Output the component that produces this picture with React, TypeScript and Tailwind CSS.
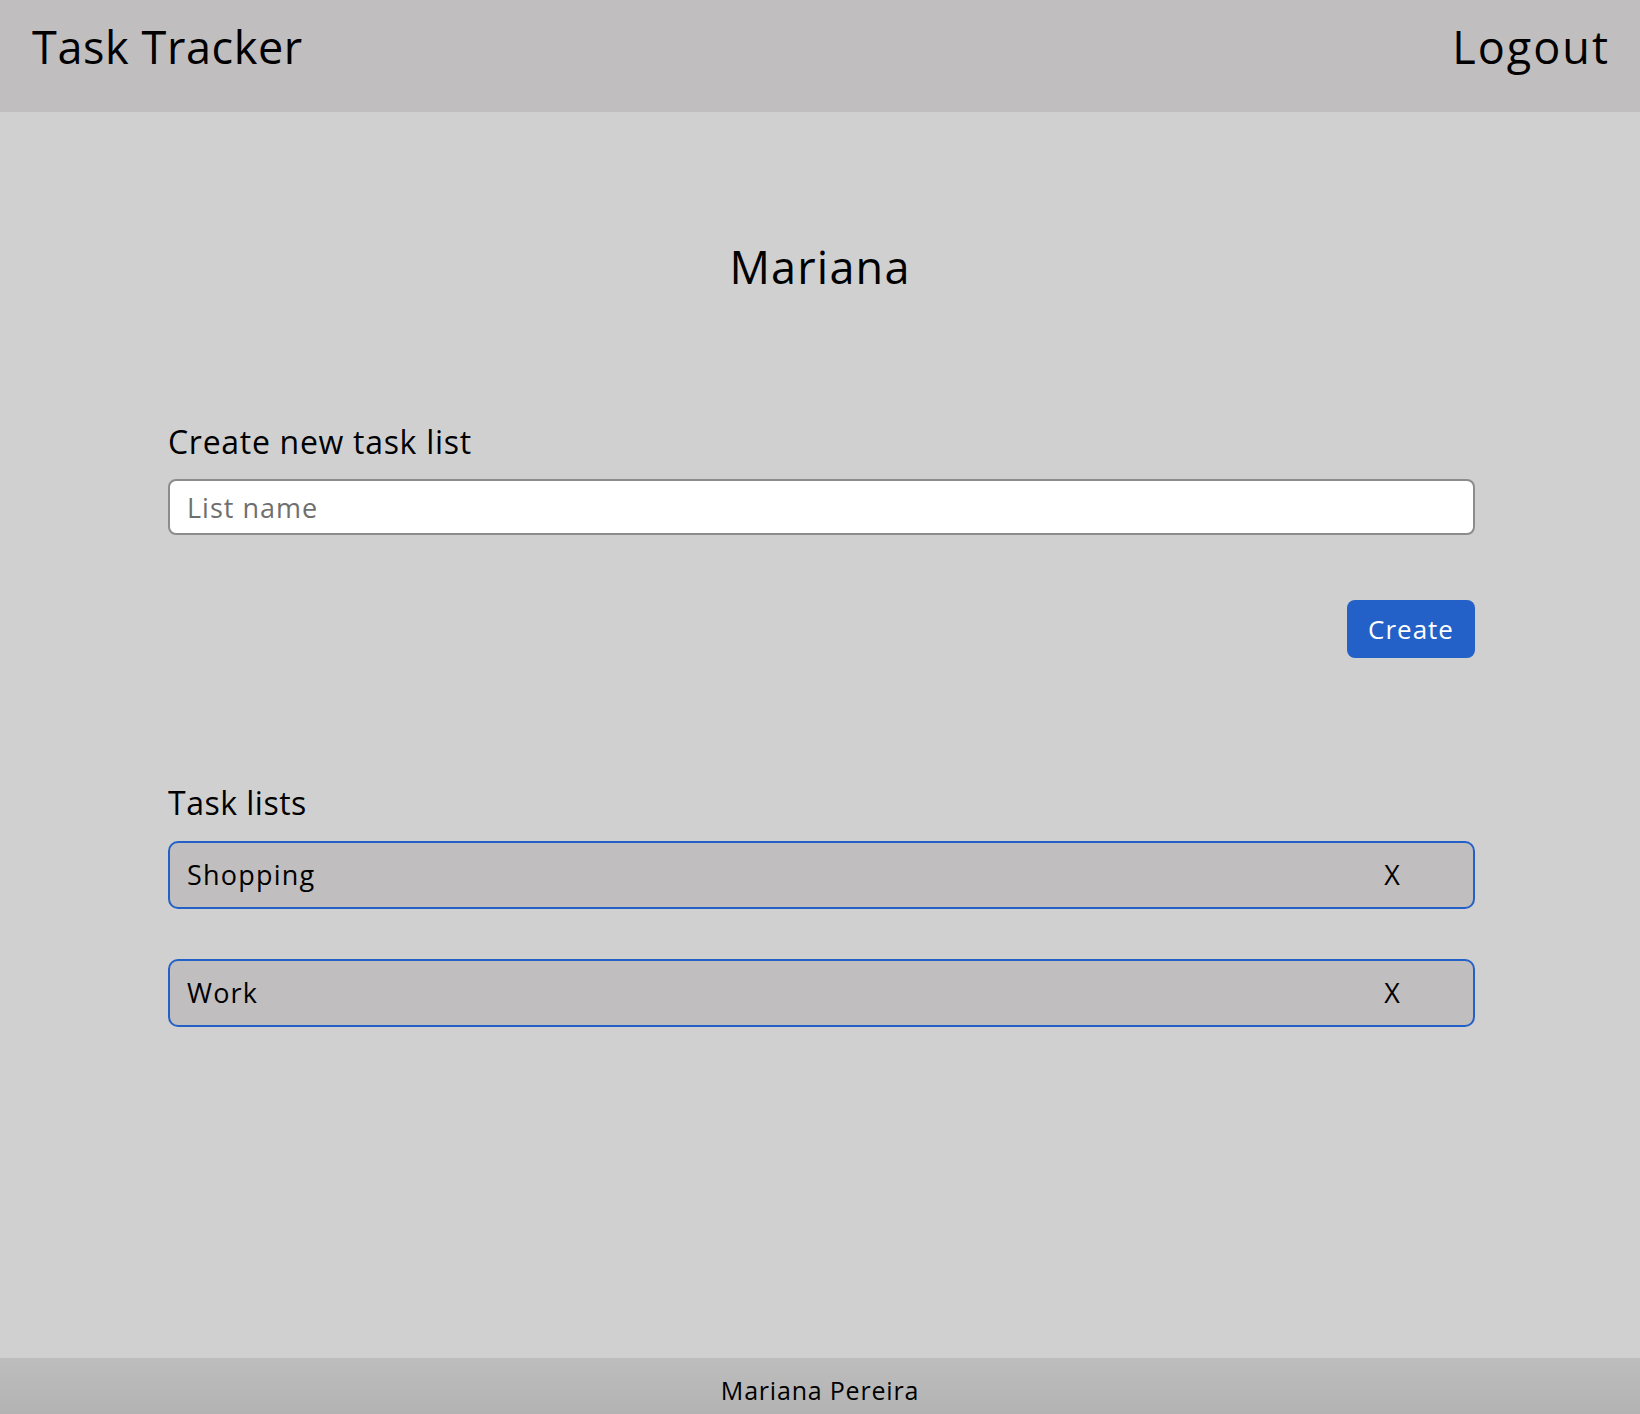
import { useState } from 'react';

export default function App() {
  const [name, setName] = useState('');
  const [lists, setLists] = useState<string[]>(['Shopping', 'Work']);

  const create = () => {
    if (!name.trim()) return;
    setLists((prev) => [...prev, name.trim()]);
    setName('');
  };

  return (
    <div className="min-h-screen flex flex-col bg-[#d0d0d0] text-black font-['Open_Sans',sans-serif]">
      <header className="h-[112px] bg-[#c0bebf] flex items-center justify-between pl-8 pr-[30px]">
        <h1 className="text-[45px] leading-none pb-5 tracking-[0.6px]">Task Tracker</h1>
        <button className="text-[45px] leading-none pb-5 tracking-[2px]">Logout</button>
      </header>

      <main className="flex-1">
        <h2 className="text-center text-[45px] leading-none mt-[132px] tracking-[1.2px]">Mariana</h2>

        <div className="w-[1307px] ml-[168px] mt-[137px]">
          <label className="block text-[32px] leading-none tracking-[0.7px]">Create new task list</label>
          <input
            value={name}
            onChange={(e) => setName(e.target.value)}
            placeholder="List name"
            className="mt-[21px] w-full h-[56px] bg-white border-2 border-[#8c8c8c] rounded-lg pl-[17px] text-[27px] tracking-[1px] placeholder:text-[#6f6f6f] outline-none"
          />
          <div className="flex justify-end mt-[65px]">
            <button
              onClick={create}
              className="w-[128px] h-[58px] rounded-lg bg-[#2361c8] text-white text-[26px] tracking-[1px]"
            >
              Create
            </button>
          </div>

          <h3 className="text-[32px] leading-none mt-[129px] tracking-[0.5px]">Task lists</h3>
          <ul className="mt-[22px] flex flex-col gap-[50px]">
            {lists.map((l) => (
              <li
                key={l}
                className="h-[68px] border-2 border-[#2361c8] rounded-[10px] bg-[#c0bebf] flex items-center justify-between pl-[17px] pr-[72px] text-[27px] tracking-[1.2px]"
              >
                <span>{l}</span>
                <button onClick={() => setLists((prev) => prev.filter((x) => x !== l))}>X</button>
              </li>
            ))}
          </ul>
        </div>
      </main>

      <footer className="h-[56px] bg-gradient-to-b from-[#bebdbd] to-[#b3b3b3] flex items-center justify-center pt-[10px] text-[25px] tracking-[0.8px]">
        Mariana Pereira
      </footer>
    </div>
  );
}
